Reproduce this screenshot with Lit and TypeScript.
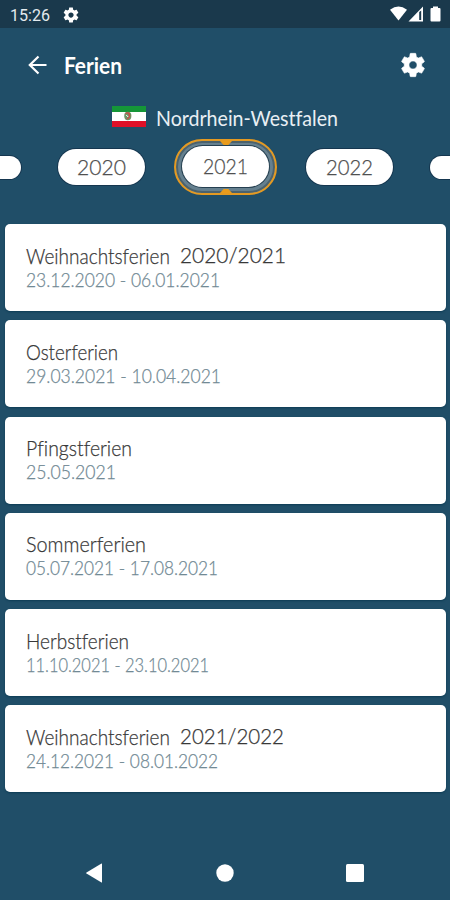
import { LitElement, html, svg, css, nothing } from "lit";
import { customElement, property } from "lit/decorators.js";

/** One line of text, fitted to a given advance width. */
@customElement("fit-text")
class FitText extends LitElement {
  @property() text = "";
  @property({ type: Number }) width = 100;
  @property({ type: Number }) size = 20;

  static styles = css`
    :host { display: block; flex: none; font-variant-ligatures: none; }
    svg { display: block; overflow: visible; }
    text { fill: currentColor; stroke: currentColor; stroke-width: var(--text-stroke, 0); }
  `;

  render() {
    const h = Math.round(this.size * 1.2);
    return html`<svg width=${this.width} height=${h}>
      ${svg`<text x="0" y=${this.size} font-size=${this.size} textLength=${this.width} lengthAdjust="spacingAndGlyphs">${this.text}</text>`}
    </svg>`;
  }
}

interface Holiday {
  name: string;
  nameWidth: number;
  years?: string;
  yearsWidth?: number;
  dates: string;
  datesWidth: number;
}

const HOLIDAYS: Holiday[] = [
  { name: "Weihnachtsferien", nameWidth: 144, years: "2020/2021", yearsWidth: 106, dates: "23.12.2020 - 06.01.2021", datesWidth: 194 },
  { name: "Osterferien", nameWidth: 92, dates: "29.03.2021 - 10.04.2021", datesWidth: 195 },
  { name: "Pfingstferien", nameWidth: 106, dates: "25.05.2021", datesWidth: 90 },
  { name: "Sommerferien", nameWidth: 120, dates: "05.07.2021 - 17.08.2021", datesWidth: 192 },
  { name: "Herbstferien", nameWidth: 103, dates: "11.10.2021 - 23.10.2021", datesWidth: 183 },
  { name: "Weihnachtsferien", nameWidth: 144, years: "2021/2022", yearsWidth: 104, dates: "24.12.2021 - 08.01.2022", datesWidth: 192 },
];

const GEAR =
  "M19.43 12.98c.04-.32.07-.64.07-.98s-.03-.66-.07-.98l2.11-1.65c.19-.15.24-.42.12-.64l-2-3.46c-.12-.22-.39-.3-.61-.22l-2.49 1c-.52-.4-1.08-.73-1.69-.98l-.38-2.65C14.46 2.18 14.25 2 14 2h-4c-.25 0-.46.18-.49.42l-.38 2.65c-.61.25-1.17.59-1.69.98l-2.49-1c-.23-.09-.49 0-.61.22l-2 3.46c-.13.22-.07.49.12.64l2.11 1.65c-.04.32-.07.65-.07.98s.03.66.07.98l-2.11 1.65c-.19.15-.24.42-.12.64l2 3.46c.12.22.39.3.61.22l2.49-1c.52.4 1.08.73 1.69.98l.38 2.65c.03.24.24.42.49.42h4c.25 0 .46-.18.49-.42l.38-2.65c.61-.25 1.17-.59 1.69-.98l2.49 1c.23.09.49 0 .61-.22l2-3.46c.12-.22.07-.49-.12-.64l-2.11-1.65zM12 15.5c-1.93 0-3.5-1.57-3.5-3.5s1.57-3.5 3.5-3.5 3.5 1.57 3.5 3.5-1.57 3.5-3.5 3.5z";

@customElement("app-root")
class AppRoot extends LitElement {
  static styles = css`
    :host {
      display: flex;
      flex-direction: column;
      width: 450px;
      height: 900px;
      overflow: hidden;
      background: #204e68;
      color: #fff;
      font-family: "Lato", "Open Sans", sans-serif;
    }
    svg { display: block; flex: none; }
    .status {
      display: flex;
      align-items: center;
      height: 28px;
      flex: none;
      box-sizing: border-box;
      padding: 0 8px 0 10px;
      background: #1a394c;
      color: #e4eaee;
      font-family: "Roboto", sans-serif;
    }
    .status .gear { margin: 1px 0 0 12px; }
    .status .signals { margin-left: auto; }
    .bar {
      display: flex;
      align-items: center;
      height: 74px;
      flex: none;
      box-sizing: border-box;
      padding: 0 23px 0 28px;
    }
    .bar .title { margin: 0 0 0 17px; font-weight: 700; }
    .bar .gear { margin-left: auto; }
    .region {
      display: flex;
      height: 32px;
      flex: none;
      padding-left: 112px;
      gap: 10px;
      color: #e9eff4;
    }
    .region .flag { margin-top: 4px; }
    .region .name { margin-top: 3px; }
    .years {
      display: flex;
      align-items: center;
      gap: 29px;
      height: 66px;
      flex: none;
    }
    .pill {
      display: flex;
      align-items: center;
      justify-content: center;
      box-sizing: border-box;
      width: 87px;
      height: 36px;
      flex: none;
      border-radius: 18px;
      background: #fff;
      color: #505050;
      box-shadow: 0 0 0 1px #15364f;
      font-weight: 300;
      --text-stroke: 0.25px;
    }
    .pill fit-text { margin-top: -3px; }
    .edge-left { width: 21px; height: 23px; margin-right: 8px; border-radius: 0 12px 12px 0; }
    .edge-right { width: 20px; height: 23px; margin-left: 8px; border-radius: 12px 0 0 12px; }
    .ring {
      position: relative;
      box-sizing: border-box;
      width: 103px;
      height: 56px;
      flex: none;
      border: 2px solid #e49a22;
      border-radius: 28px;
      padding: 5px 6px 6px;
      background: #65808f;
      box-shadow: inset 0 0 0 2px #4b626d;
    }
    .ring .pill { height: 41px; border-radius: 21px; box-shadow: 0 0 0 1px #253f50; }
    .notch {
      position: absolute;
      left: 44px;
      width: 12px;
      height: 4px;
      background: #e99b1c;
    }
    .notch.top { top: 0; clip-path: polygon(0 0, 100% 0, 70% 100%, 30% 100%); }
    .notch.bottom { bottom: 0; clip-path: polygon(30% 0, 70% 0, 100% 100%, 0 100%); }
    .list {
      display: flex;
      flex-direction: column;
      gap: 9.3px;
      padding: 24px 4px 0 5px;
    }
    .card {
      box-sizing: border-box;
      height: 87px;
      flex: none;
      padding: 17.5px 21px 0;
      border-radius: 5px;
      background: #fff;
      box-shadow: 0 1px 2px #0d3c55;
      font-weight: 300;
      --text-stroke: 0.25px;
    }
    .heading { display: flex; gap: 10px; height: 26px; color: #383838; }
    .heading .span { margin-top: -1px; }
    .dates { color: #718994; }
    .nav {
      display: flex;
      align-items: center;
      justify-content: space-between;
      margin-top: auto;
      height: 54px;
      padding: 0 86px;
    }
  `;

  render() {
    return html`
      <div class="status">
        <fit-text text="15:26" width="40" size="16"></fit-text>
        <svg class="gear" width="18" height="18" viewBox="0 0 24 24"><path fill="#fff" d=${GEAR} /></svg>
        <svg class="signals" width="52" height="16" viewBox="0 0 52 16">
          <path fill="#fff" d="M0 3.8Q8.5-3 17 3.8L8.5 14.5Z" />
          <path fill="#fff" fill-rule="evenodd" d="M33 .5V15.500H18.500ZM29.200 6v8h2V4.500Z" />
          <path fill="#fff" d="M41.500 2H43V.5h5V2h1.500q1 0 1 1v11.500q0 1-1 1h-8q-1 0-1-1V3q0-1 1-1Z" />
        </svg>
      </div>
      <div class="bar">
        <svg width="19" height="20" viewBox="0 0 19 20">
          <path d="M10.500 1.500L1.800 10l8.700 8.500M2 10h16.500" fill="none" stroke="#fff" stroke-width="2.200" />
        </svg>
        <fit-text class="title" text="Ferien" width="58" size="23"></fit-text>
        <svg class="gear" width="28" height="28" viewBox="0 0 24 24"><path fill="#fff" stroke="#fff" stroke-width=".5" d=${GEAR} /></svg>
      </div>
      <div class="region">
        <svg class="flag" width="34" height="21" viewBox="0 0 34 21">
          <path fill="#fff" d="M0 0h34v21H0z" />
          <path fill="#159638" d="M0 0h34v6H0z" />
          <path fill="#df1028" d="M0 15h34v6H0z" />
          <ellipse cx="15.800" cy="10" rx="3.600" ry="4.200" fill="#6f9566" />
          <path d="M13.500 7.500q3-1.500 4 1t-2.500 4.500M17 6.500v3" fill="none" stroke="#d34a4a" stroke-width="1.200" />
          <path d="M14.200 9l2 2" stroke="#fff" stroke-width="1" />
        </svg>
        <fit-text class="name" text="Nordrhein-Westfalen" width="182" size="21"></fit-text>
      </div>
      <div class="years">
        <div class="pill edge-left"></div>
        <div class="pill"><fit-text text="2020" width="49" size="22"></fit-text></div>
        <div class="ring">
          <div class="pill"><fit-text text="2021" width="45" size="22"></fit-text></div>
          <div class="notch top"></div>
          <div class="notch bottom"></div>
        </div>
        <div class="pill"><fit-text text="2022" width="47" size="22"></fit-text></div>
        <div class="pill edge-right"></div>
      </div>
      <div class="list">
        ${HOLIDAYS.map(
          (h) => html`<div class="card">
            <div class="heading">
              <fit-text .text=${h.name} .width=${h.nameWidth} .size=${21.5}></fit-text>
              ${h.years
                ? html`<fit-text class="span" .text=${h.years} .width=${h.yearsWidth ?? 0} .size=${21.5}></fit-text>`
                : nothing}
            </div>
            <fit-text class="dates" .text=${h.dates} .width=${h.datesWidth} .size=${19}></fit-text>
          </div>`
        )}
      </div>
      <div class="nav">
        <svg width="17" height="20" viewBox="0 0 17 20"><path fill="#fff" d="M16 .8v18.400q0 .5-.5.3L.5 10.500q-.6-.5 0-1L15.500.5q.5-.2.500.3Z" /></svg>
        <svg width="18" height="18" viewBox="0 0 18 18"><circle cx="9" cy="9" r="8.700" fill="#fff" /></svg>
        <svg width="18" height="18" viewBox="0 0 18 18"><rect width="18" height="18" rx="1.500" fill="#fff" /></svg>
      </div>
    `;
  }
}
